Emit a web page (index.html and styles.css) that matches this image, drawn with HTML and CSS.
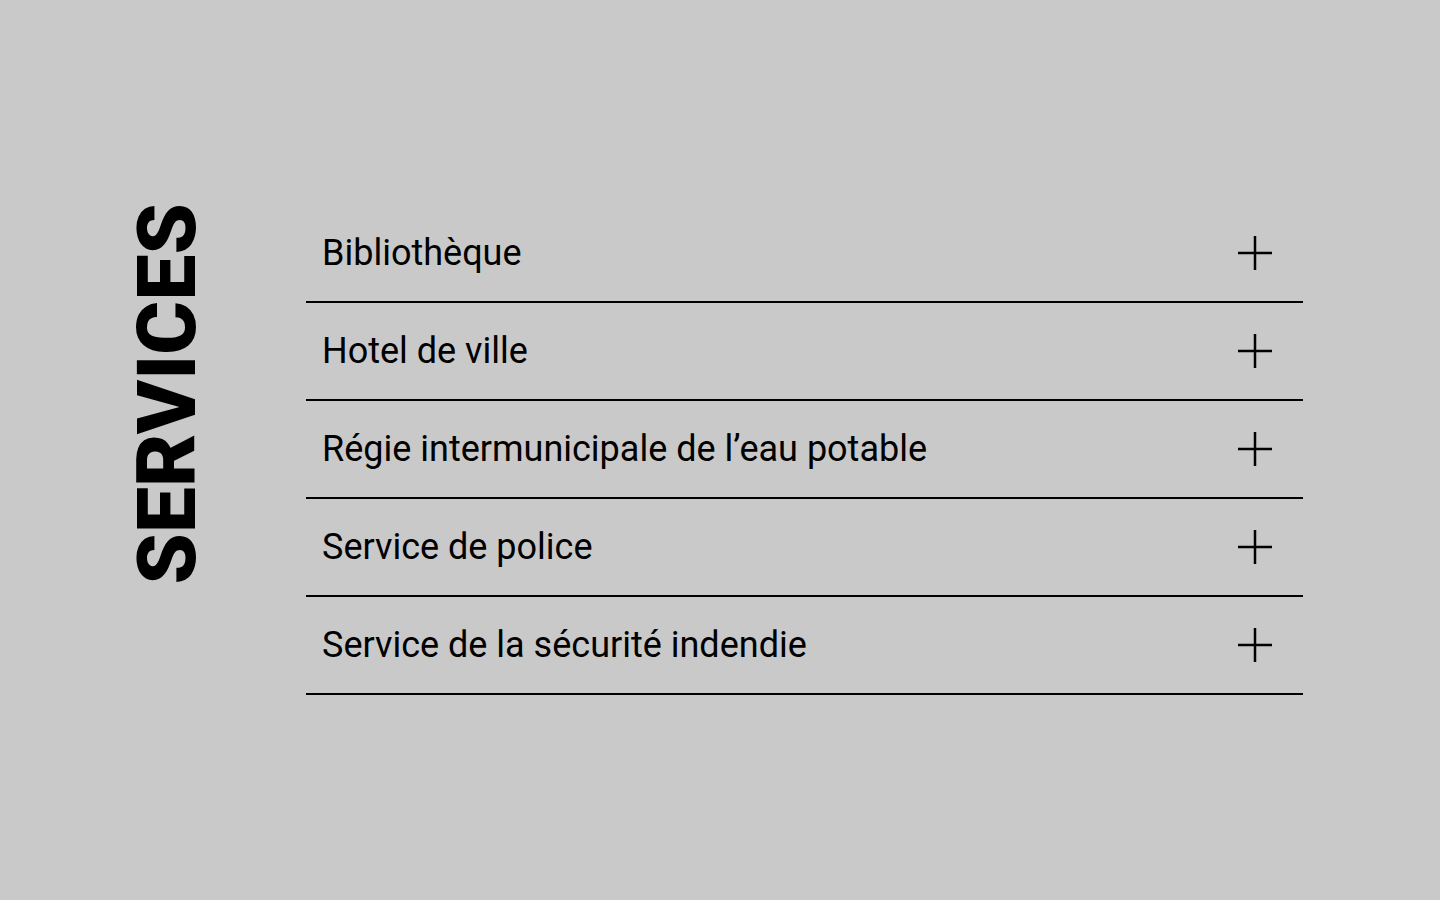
FILE: index.html
```html
<!DOCTYPE html>
<html lang="fr">
<head>
<meta charset="utf-8">
<title>Services</title>
<link rel="stylesheet" href="styles.css">
</head>
<body>
<main class="page">
  <h1 class="title">SERVICES</h1>
  <ul class="list">
    <li class="item"><span class="label">Bibliothèque</span><svg class="plus" viewBox="0 0 34 34"><path d="M17 0V34M0 17H34"/></svg></li>
    <li class="item"><span class="label">Hotel de ville</span><svg class="plus" viewBox="0 0 34 34"><path d="M17 0V34M0 17H34"/></svg></li>
    <li class="item"><span class="label">Régie intermunicipale de l’eau potable</span><svg class="plus" viewBox="0 0 34 34"><path d="M17 0V34M0 17H34"/></svg></li>
    <li class="item"><span class="label">Service de police</span><svg class="plus" viewBox="0 0 34 34"><path d="M17 0V34M0 17H34"/></svg></li>
    <li class="item"><span class="label">Service de la sécurité indendie</span><svg class="plus" viewBox="0 0 34 34"><path d="M17 0V34M0 17H34"/></svg></li>
  </ul>
</main>
</body>
</html>
```
FILE: styles.css
```css
html, body {
  margin: 0;
  padding: 0;
  background: #c9c9c9;
  color: #000;
}
body {
  width: 1440px;
  height: 900px;
  overflow: hidden;
}
.page {
  display: flex;
  align-items: flex-start;
  padding: 205px 0 0 126px;
}
.title {
  margin: -2px 0 0 0;
  font-family: Roboto, "Liberation Sans", sans-serif;
  font-weight: 900;
  font-size: 82px;
  line-height: 1;
  letter-spacing: 0.2px;
  writing-mode: vertical-rl;
  transform: rotate(180deg);
}
.list {
  list-style: none;
  margin: 0 0 0 98px;
  padding: 0;
  width: 997px;
}
.item {
  display: flex;
  align-items: center;
  justify-content: space-between;
  height: 96px;
  border-bottom: 2px solid #000;
  padding: 0 31px 0 16px;
}
.label {
  font-family: Roboto, "Liberation Sans", sans-serif;
  font-size: 36px;
  line-height: 1;
}
.plus {
  width: 34px;
  height: 34px;
  stroke: #000;
  stroke-width: 2.5;
  fill: none;
}
```
